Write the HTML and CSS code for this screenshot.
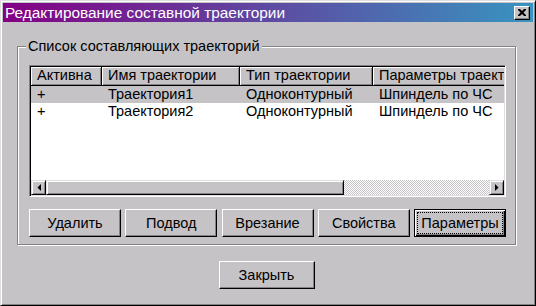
FILE: index.html
```html
<!DOCTYPE html>
<html lang="ru">
<head>
    <meta charset="UTF-8">
    <title>Редактирование составной траектории</title>
    <link rel="stylesheet" href="styles.css">
</head>
<body>
    <div class="window">
        <div class="titlebar">
            <span class="title">Редактирование составной траектории</span>
            <button type="button" class="close-btn">
                <svg width="8" height="7" viewBox="0 0 8 7"><path d="M0 0h2l2 2 2-2h2v1l-2.5 2.5L8 6v1H6L4 5 2 7H0V6l2.5-2.5L0 1z" fill="#000"/></svg>
            </button>
        </div>

        <div class="content">
            <div class="group">
                <span class="group-label">Список составляющих траекторий</span>

                <div class="list">
                    <div class="list-head">
                        <div class="col col1 head-cell">Активна</div>
                        <div class="col col2 head-cell">Имя траектории</div>
                        <div class="col col3 head-cell">Тип траектории</div>
                        <div class="col col4 head-cell">Параметры траектории</div>
                    </div>
                    <div class="list-rows">
                        <div class="row selected">
                            <div class="col col1">+</div>
                            <div class="col col2">Траектория1</div>
                            <div class="col col3">Одноконтурный</div>
                            <div class="col col4">Шпиндель по ЧС</div>
                        </div>
                        <div class="row">
                            <div class="col col1">+</div>
                            <div class="col col2">Траектория2</div>
                            <div class="col col3">Одноконтурный</div>
                            <div class="col col4">Шпиндель по ЧС</div>
                        </div>
                    </div>
                    <div class="hscroll">
                        <div class="sb-btn">
                            <svg width="4" height="7" viewBox="0 0 4 7"><path d="M4 0v7L0.5 3.5z" fill="#000"/></svg>
                        </div>
                        <div class="sb-thumb"></div>
                        <div class="sb-track"></div>
                        <div class="sb-btn">
                            <svg width="4" height="7" viewBox="0 0 4 7"><path d="M0 0v7L3.5 3.5z" fill="#000"/></svg>
                        </div>
                    </div>
                </div>

                <div class="buttons">
                    <button type="button" class="btn">Удалить</button>
                    <button type="button" class="btn">Подвод</button>
                    <button type="button" class="btn">Врезание</button>
                    <button type="button" class="btn">Свойства</button>
                    <button type="button" class="btn btn-default"><span class="focus">Параметры</span></button>
                </div>
            </div>

            <div class="footer">
                <button type="button" class="btn btn-close">Закрыть</button>
            </div>
        </div>
    </div>
</body>
</html>
```

FILE: styles.css
```css
body {
    margin: 0;
    padding: 0;
    font-family: "Liberation Sans", Arial, sans-serif;
    font-size: 14.5px;
    color: #000;
    background-color: #c6c3c6;
}
.window {
    width: 536px;
    height: 306px;
    box-sizing: border-box;
    background-color: #c6c3c6; /* серый */
    border: 1px solid;
    border-color: #dfdfdf #000 #000 #dfdfdf;
    box-shadow: inset 1px 1px #fff, inset -1px -1px #848284;
    padding: 2px;
    display: flex;
    flex-direction: column;
}
.titlebar {
    height: 19px;
    display: flex;
    align-items: center;
    justify-content: space-between;
    padding: 0 3px 0 2px;
    background: linear-gradient(to right, #840084, #3894c0);
    color: #fff;
}
.title {
    font-size: 15.4px;
    line-height: 19px;
    white-space: nowrap;
}
.close-btn {
    width: 16px;
    height: 14px;
    padding: 0;
    display: flex;
    align-items: center;
    justify-content: center;
    background-color: #c6c3c6;
    border: 1px solid;
    border-color: #fff #000 #000 #fff;
    box-shadow: inset -1px -1px #848284;
}
.content {
    flex: 1;
    padding: 24px 17px 0 14px;
}
.group {
    position: relative;
    border: 1px solid #848284;
    box-shadow: 1px 1px 0 #fff, inset 1px 1px 0 #fff;
    padding: 18px 9px 7px 11px;
}
.group-label {
    position: absolute;
    top: -9px;
    left: 8px;
    padding: 0 2px;
    line-height: 16px;
    background-color: #c6c3c6;
    white-space: nowrap;
}
.list {
    height: 132px;
    box-sizing: border-box;
    border: 1px solid;
    border-color: #848284 #fff #fff #848284;
    box-shadow: inset 1px 1px #000, inset -1px -1px #dfdfdf;
    padding: 1px;
    background-color: #fff;
    display: flex;
    flex-direction: column;
    overflow: hidden;
}
.list-head,
.row {
    display: flex;
    white-space: nowrap;
    overflow: hidden;
}
.list-head {
    height: 19px;
    flex-shrink: 0;
}
.col {
    flex-shrink: 0;
    box-sizing: border-box;
    padding-left: 6px;
    overflow: hidden;
}
.col1 { width: 71px; }
.col2 { width: 138px; }
.col3 { width: 133px; }
.col4 { width: 140px; }
.head-cell {
    background-color: #c6c3c6;
    line-height: 17px;
    border-right: 1px solid #000;
    border-bottom: 1px solid #000;
    box-shadow: inset 1px 1px #fff, inset -1px -1px #848284;
}
.list-rows {
    flex: 1;
}
.row {
    height: 17px;
    line-height: 17px;
}
.row.selected {
    background-color: #c6c3c6;
}
.hscroll {
    height: 15px;
    flex-shrink: 0;
    display: flex;
}
.sb-btn,
.sb-thumb {
    box-sizing: border-box;
    background-color: #c6c3c6;
    border: 1px solid;
    border-color: #dfdfdf #000 #000 #dfdfdf;
    box-shadow: inset 1px 1px #fff, inset -1px -1px #848284;
}
.sb-btn {
    width: 15px;
    display: flex;
    align-items: center;
    justify-content: center;
}
.sb-thumb {
    width: 298px;
}
.sb-track {
    flex: 1;
    background: repeating-conic-gradient(#fff 0 25%, #c6c3c6 0 50%) 0 0 / 2px 2px;
}
.buttons {
    margin-top: 12px;
    display: flex;
    justify-content: space-between;
}
.btn {
    width: 92px;
    height: 28px;
    padding: 0;
    font-family: inherit;
    font-size: 14.5px;
    color: #000;
    background-color: #c6c3c6;
    border: 1px solid;
    border-color: #fff #000 #000 #fff;
    box-shadow: inset -1px -1px #848284;
}
.btn-default {
    border-color: #000;
    box-shadow: inset 1px 1px #fff, inset -1px -1px #000, inset -2px -2px #848284;
    display: flex;
    align-items: center;
    justify-content: center;
}
.focus {
    flex: 1;
    align-self: stretch;
    margin: 2px;
    border: 1px dotted #000;
    display: flex;
    align-items: center;
    justify-content: center;
}
.footer {
    display: flex;
    justify-content: center;
    margin-top: 16px;
}
.btn-close {
    width: 96px;
}
```
